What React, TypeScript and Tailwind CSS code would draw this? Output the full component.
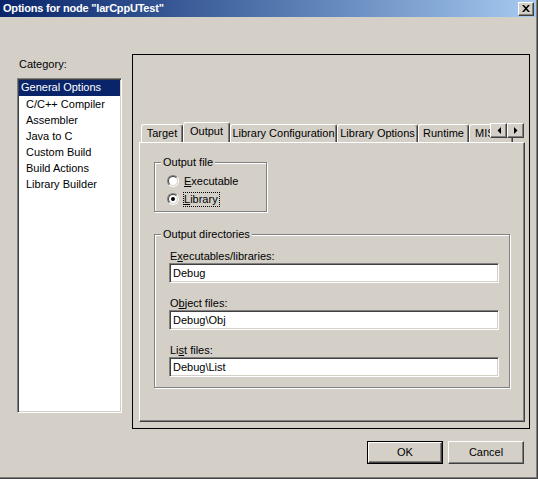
import React from "react";

const sunken =
  "border border-t-[#808080] border-l-[#808080] border-r-white border-b-white shadow-[inset_1px_1px_0_#404040,inset_-1px_-1px_0_#d4d0c8]";
const raised =
  "border border-t-white border-l-white border-r-[#404040] border-b-[#404040] shadow-[inset_-1px_-1px_0_#808080]";
const etched = "border border-[#808080] shadow-[inset_1px_1px_0_#fff,1px_1px_0_#fff]";

const categories = ["C/C++ Compiler", "Assembler", "Java to C", "Custom Build", "Build Actions", "Library Builder"];

const tabs = [
  { label: "Target", w: "w-[42px] justify-center" },
  { label: "Output", w: "w-[47px] justify-center", selected: true },
  { label: "Library Configuration", w: "w-[107px] justify-center" },
  { label: "Library Options", w: "w-[81px] justify-center" },
  { label: "Runtime", w: "w-[51px] justify-center" },
  { label: "MISRA C", w: "w-[44px] justify-start pl-[5px]" },
];

function Radio({ checked }: { checked?: boolean }) {
  return (
    <span className="flex h-[12px] w-[12px] shrink-0 items-center justify-center rounded-full border border-t-[#808080] border-l-[#808080] border-r-white border-b-white">
      <span className="flex h-[10px] w-[10px] items-center justify-center rounded-full border border-t-[#404040] border-l-[#404040] border-r-[#d4d0c8] border-b-[#d4d0c8] bg-white">
        {checked ? <span className="h-[4px] w-[4px] rounded-full bg-black" /> : null}
      </span>
    </span>
  );
}

function Field({ label, value, first }: { label: React.ReactNode; value: string; first?: boolean }) {
  return (
    <div className={first ? "" : "mt-[14px]"}>
      <div className="h-[13px] pl-[1px] leading-[13px]">{label}</div>
      <div className={`${sunken} h-[20px] w-[330px] bg-white pl-[3px] leading-[18px]`}>{value}</div>
    </div>
  );
}

function Arrow({ dir }: { dir: "left" | "right" }) {
  return (
    <div className={`${raised} flex h-[15px] w-[17px] items-center justify-center bg-[#d4d0c8]`}>
      <svg width="4" height="7" viewBox="0 0 4 7">
        {dir === "left" ? <path d="M4 0V7L0.5 3.5Z" fill="#000" /> : <path d="M0 0V7L3.5 3.5Z" fill="#000" />}
      </svg>
    </div>
  );
}

export default function App() {
  return (
    <div className="h-[479px] w-[538px] border-r border-b border-[#404040] bg-[#d4d0c8] font-['Liberation_Sans',Arial,sans-serif] text-[11px] text-black">
      <div className="flex h-full w-full flex-col border-r border-b border-[#808080]">
        {/* title bar */}
        <div className="flex h-[17px] shrink-0 items-center bg-gradient-to-r from-[#0a246a] to-[#a6caf0]">
          <span className="pl-[3px] text-[11px] font-bold leading-[17px] tracking-[-0.2px] text-white">
            {'Options for node "IarCppUTest"'}
          </span>
          <div className={`${raised} ml-auto mr-[2px] flex h-[14px] w-[16px] items-center justify-center bg-[#d4d0c8]`}>
            <svg width="8" height="7" viewBox="0 0 8 7">
              <path d="M0 0H2L4 2.2L6 0H8L5 3.5L8 7H6L4 4.8L2 7H0L3 3.5Z" fill="#000" />
            </svg>
          </div>
        </div>

        <div className="flex">
          {/* category list */}
          <div className="pl-[17px] pt-[41px]">
            <div className="h-[13px] pl-[2px] leading-[13px]">Category:</div>
            <div className={`${sunken} mt-[7px] h-[335px] w-[105px] bg-white p-[1px]`}>
              <div className="h-[16px] bg-[#0a246a] pl-[2px] leading-[15px] text-white">General Options</div>
              {categories.map((c) => (
                <div key={c} className="h-[16px] pl-[7px] leading-[16px]">
                  {c}
                </div>
              ))}
            </div>
          </div>

          {/* options frame */}
          <div className="ml-[10px] mt-[37px] h-[375px] w-[398px] border border-black">
            <div className="ml-[6px] mt-[67px] w-[386px]">
              <div className="relative flex h-[20px] items-end overflow-hidden pl-[2px]">
                {tabs.map((t) => (
                  <div
                    key={t.label}
                    className={`${t.w} ${
                      t.selected ? "relative z-10 -mb-px h-[21px] pb-[3px]" : "h-[18px] pb-[1px]"
                    } flex shrink-0 items-center overflow-hidden whitespace-nowrap rounded-t-[3px] border-x border-t border-t-white border-l-white border-r-[#404040] bg-[#d4d0c8] shadow-[inset_-1px_0_0_#808080]`}
                  >
                    {t.label}
                  </div>
                ))}
                <div className="absolute right-[1px] top-[1px] z-20 flex">
                  <Arrow dir="left" />
                  <Arrow dir="right" />
                </div>
              </div>

              <div className="h-[280px] border border-t-white border-l-white border-r-[#404040] border-b-[#404040] pt-[13px] pl-[14px] shadow-[inset_-1px_-1px_0_#808080]">
                <fieldset className={`${etched} m-0 w-[113px] min-w-0 px-0 pt-[3px] pb-[3px]`}>
                  <legend className="ml-[6px] bg-[#d4d0c8] px-[2px] leading-[13px]">Output file</legend>
                  <div className="flex h-[18px] items-center pl-[12px]">
                    <Radio />
                    <span className="ml-[4px] border border-transparent pr-[1px] leading-[13px]">
                      <u>E</u>xecutable
                    </span>
                  </div>
                  <div className="flex h-[18px] items-center pl-[12px]">
                    <Radio checked />
                    <span className="ml-[4px] border border-dotted border-black pr-[1px] leading-[13px]">
                      <u>L</u>ibrary
                    </span>
                  </div>
                </fieldset>

                <fieldset className={`${etched} m-0 mt-[16px] w-[356px] min-w-0 pl-[14px] pt-[9px] pb-[10px]`}>
                  <legend className="-ml-[8px] bg-[#d4d0c8] px-[2px] leading-[13px]">Output directories</legend>
                  <Field
                    first
                    label={
                      <>
                        E<u>x</u>ecutables/libraries:
                      </>
                    }
                    value="Debug"
                  />
                  <Field
                    label={
                      <>
                        O<u>b</u>ject files:
                      </>
                    }
                    value="Debug\Obj"
                  />
                  <Field
                    label={
                      <>
                        Li<u>s</u>t files:
                      </>
                    }
                    value="Debug\List"
                  />
                </fieldset>
              </div>
            </div>
          </div>
        </div>

        {/* buttons */}
        <div className="mt-[12px] flex justify-end gap-[5px] pr-[12px]">
          <div className="h-[23px] w-[76px] border border-black">
            <div className={`${raised} flex h-full w-full items-center justify-center`}>OK</div>
          </div>
          <div className={`${raised} flex h-[23px] w-[76px] items-center justify-center`}>Cancel</div>
        </div>
      </div>
    </div>
  );
}
